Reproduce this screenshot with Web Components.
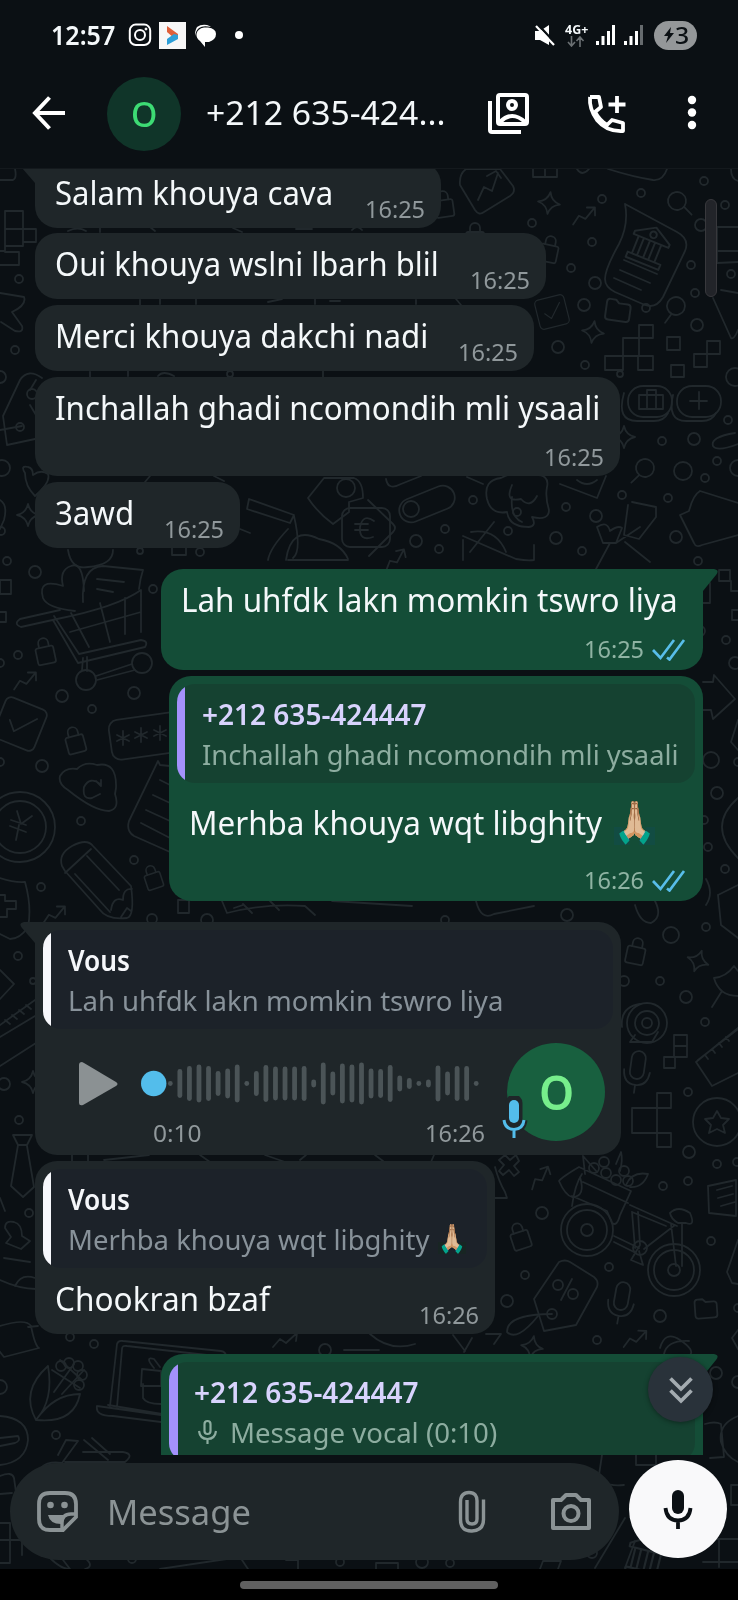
<!DOCTYPE html>
<html lang="fr"><head><meta charset="utf-8"><title>Discussion</title>
<style>
html,body{margin:0;background:#000}
body{width:738px;height:1600px;overflow:hidden;font-family:"Noto Sans",sans-serif;color:#f4f8fa}
</style></head><body>
<chat-app></chat-app>
<script>
const def=(name,html,init)=>customElements.define(name,class extends HTMLElement{
  connectedCallback(){
    if(this.shadowRoot)return;
    const t=document.createElement('template');
    t.innerHTML=typeof html==='function'?html(this):html;
    this.attachShadow({mode:'open'}).appendChild(t.content.cloneNode(true));
    if(init)init(this,this.shadowRoot);
  }});

/* A single line of text set to a given width */
def('fit-text','<style>:host{display:block;white-space:nowrap;flex:none}span{display:inline-block;transform-origin:0 50%}</style><span><slot></slot></span>',(el,r)=>{
  const s=r.querySelector('span'),w=+el.getAttribute('w');
  el.style.width=w+'px';
  s.style.transform='scaleX('+w/s.offsetWidth+')';
});

/* Doodle wallpaper */
const ring=[[346,488,9],[19,279,4],[15,350,4],[0,377,6],[2,468,8],[7,561,4],[35,572,6],[153,589,4],[18,655,4],[0,663,4],[62,696,6],[134,693,6],[92,709,4],[42,766,6],[0,762,4],[81,821,4],[134,860,4],[41,887,4],[18,956,4],[33,981,3],[4,1084,6],[19,1120,4],[29,1213,4],[70,1337,4],[94,1344,4],[56,1435,4],[0,1387,7],[704,181,4],[602,199,4],[641,193,4],[725,205,4],[532,223,4],[701,225,6],[592,242,4],[571,268,4],[691,265,4],[595,283,6],[731,274,4],[695,293,4],[584,305,6],[646,308,4],[697,325,6],[558,347,6],[585,365,4],[735,377,9],[728,420,4],[662,441,4],[694,439,6],[683,471,9],[738,468,8],[717,461,4],[705,478,4],[622,495,4],[668,498,4],[473,500,4],[566,507,4],[596,516,6],[676,537,6],[445,529,4],[416,541,6],[439,549,4],[556,538,6],[582,551,4],[698,561,4],[726,640,4],[735,663,6],[700,631,5],[711,760,8],[738,762,4],[717,793,6],[708,847,4],[725,869,4],[704,820,4],[567,915,6],[671,935,8],[706,927,4],[660,981,4],[686,997,6],[705,1022,4],[624,981,5],[688,1092,4],[689,1152,6],[717,1164,4],[663,1186,4],[688,1181,4],[542,1213,6],[711,1241,4],[609,1267,4],[525,1275,4],[507,1301,6],[660,1316,6],[597,1340,4],[716,1373,6],[738,1382,6],[738,1308,4],[737,1162,4],[445,920,4],[152,919,5],[207,920,6],[325,1350,6],[422,1562,6],[450,1563,4],[592,1553,5],[340,1562,4],[132,1559,4],[140,551,3],[200,552,4],[230,374,3],[620,374,3]];
const use=(id,a)=>a.map(([x,y,r=0,s=1])=>`<use href="#${id}" transform="translate(${x} ${y}) rotate(${r}) scale(${s})"/>`).join('');
def('wall-paper',`<style>:host{display:block}svg{display:block;width:738px;height:1400px}</style>
<svg viewBox="0 169 738 1400" fill="none" stroke="#21282c" stroke-width="1.8" stroke-linecap="round" stroke-linejoin="round">
<defs>
<g id="lock"><rect x="-9" y="-5" width="18" height="17" rx="2"/><path d="M-5-5v-4a5 5 0 0 1 10 0v4"/></g>
<path id="star" d="M0-11Q2-2 11 0 2 2 0 11-2 2-11 0-2-2 0-11z"/>
<path id="trend" d="M-12 7L-5-1 1 3 12-7M4-8l8 1-1 8"/>
<g id="mag"><circle r="9"/><path d="M6 7l6 9"/></g>
<path id="folder" d="M-11-7q0-3 3-3h5l3 3h8q3 0 3 3v10q0 3-3 3h-16q-3 0-3-3z"/>
<g id="mic"><rect x="-7" y="-20" width="14" height="28" rx="7"/><path d="M-13 0q1 14 13 14t13-14M0 14v8"/></g>
<g id="tag"><path d="M-8-32L22-32Q28-32 28-26V26Q28 32 22 32H-8L-30 10V-10z"/><circle cx="-18" cy="0" r="4"/></g>
<g id="cal"><rect x="-22" y="-22" width="44" height="44" rx="6"/><path d="M-11 0l8 9 17-20"/></g>
<g id="bank"><path d="M-17-8L0-18 17-8v3h-34zM-16 12h32v5h-32zM-12-4v15M-7-4v15M-1-4v15M4-4v15M10-4v15"/><circle cy="-11" r="3"/></g>
</defs>
${ring.map(c=>`<circle cx="${c[0]}" cy="${c[1]}" r="${c[2]}"/>`).join('')}
${use('lock',[[45,652,-12],[75,741,-15],[549,250,12],[444,205,-8],[636,952,12],[520,1237,-18],[153,878,-18,.9],[475,237,0]])}
${use('star',[[549,203,8],[593,332,8],[698,961,20],[28,515,0],[33,1082,0],[624,437,0],[532,1347,10]])}
${use('trend',[[584,216,-8],[25,681,-8],[54,915,-8],[540,1178,-25],[635,1339,-5],[395,560,-20],[285,1340]])}
${use('mag',[[677,201,-10],[676,306,70],[645,468,80]])}
${use('folder',[[618,311,8,1.1],[706,1309,-4]])}
${use('mic',[[637,1071,8],[621,1302,10]])}
${use('cal',[[20,724,22],[552,312,-14,.68]])}
<path d="M460 185l15 25q4 6 9 2l26-16q6-4 3-10L500 169H466q-7 5-6 16M478 200l6-13 8 4 6-18M487 176l9-5 5 7"/>
<path d="M625 204q4 20-6 40-14 25-14 35 0 8 10 13l30 13q11 4 18-8l22-46q5-12-8-19L625 204M624 260l33 14M620 270l30 13M614 278l27 12"/>
<g transform="translate(649 246) rotate(22) scale(1.1)"><use href="#bank"/></g>
<path d="M608 169q25 8 45 11 10 1 14-11M533 169v8h24v-8M545 169v8M577 169q5 8 12 0M731 169q0 10 7 12M0 180l13 0q4-2 2-11"/>
<path d="M5 211h18v35H5zM5 229h31v13H23M5 229v23h14v13H0M0 251h5"/>
<path d="M0 293l24 4q3 8-12 15l10 14q2 7-7 5l-14-9M3 416L20 380q8-12 22-2M7 445l28-6M3 416l4 29M0 430l22-4M36 380l-6 10M30 405l6 10"/><circle cx="20" cy="427" r="4"/><circle cx="32" cy="394" r="5"/>
<path d="M25 473q-5-8 3-6 5 1 5 8 8-6 15-1 3 8-13 22-10-10-10-23M0 500q8 5 4 20l-4 9"/><circle cx="1" cy="531" r="4"/>
<path d="M605 356h18v14h-18zM623 356h16v-18h-16zM639 338h14v-13h-14zM638 356h15v14h-15zM667 337h13v13h-13zM671 365h13v12h-13zM694 354h13v13h-13zM707 341h13v13h-13z"/>
<path d="M717 227h21M718 251h20M717 228v35l21-1M713 298l18 40q3 2 7-8M721 290l17 3"/>
<rect x="628" y="386" width="44" height="31" rx="15"/><rect x="677" y="386" width="44" height="31" rx="15"/><path d="M624 393q-8 28 13 28h17q10 0 14-8M673 395q-6 26 13 26h16q10 0 14-8M639 395h24v14h-24zM647 395v14M656 395v14M647 394v-4h9v4M690 401h17M699 392v17M735 433q-25 4-22 13 4 6 25-2"/>
<path d="M308 498l16-20h30q9 3 9 20l-14 4v10l-16 12q-16-12-25-26"/><rect x="342" y="508" width="48" height="39" rx="8"/><path d="M374 521q-11-8-14 6-1 15 13 10M355 524h13M355 530h13"/>
<path d="M249 499l45 16-4 8-43-14zM294 516q8 35-1 42M240 529l10 4M268 560q2-12 20-31M286 560q5-35 33-21 22 4 29 20M288 560h60"/>
<rect x="398" y="492" width="58" height="24" rx="12" transform="rotate(-22 427 504)"/><circle cx="411" cy="509" r="8"/><path d="M368 500l25 24q4 4 0 8l-24 24M386 479q2 12 15 5l20-8M467 477l16 7"/>
<path d="M501 478q-18 2-14 21 4 16 20 13 2 15 22 15 8-1 3-10 17 4 17-7-4-13-2-23 3-13-14-12-17-5-32 3M512 485q-8 18 9 14 9 10 16-3M512 497q-2 20 10 25"/><circle cx="517" cy="512" r="4"/><circle cx="508" cy="531" r="4"/><path d="M463 536l53 23q12 2 18 1v-15M463 560V540M494 522l-24 30M471 532q25-4 35 20"/>
<path d="M560 484l37 14 9-22M577 480q10 8 20 0M628 505l-4 30 15 4 17-22v-10l-24-5M597 527q10-7 13 4 8-6 12-3l-6 15h-13zM616 543l24-16M610 543l-14 26M625 542l25 20M700 491q-7 4-11 20l-9 4 14 28q2 5 8 2l36-10M700 491l38 12"/>
<path d="M68 550q3 20 20 17 25-2 25-17M0 580h11v14H0zM0 612h6v10H0M172 548v7h14v-7"/>
<path d="M84 591q-1-30-13-25-12 4-8 20-26-8-20 12 4 10 32 13M83 602q-2-35 20-36l40 4q-3 9-4 19M97 579l27 3M97 589l16 3"/>
<path d="M60 610l-40 9q-7 5 1 8l36-8q60-12 84-29v42M54 616l25 38 62-14q8 1 4 7l-67 16-25-43M71 613l18 34M100 603l10 39M125 598v36M70 632l71-20M83 658l-1 12M87 657v14M96 676l36-12M97 680l38-10"/><circle cx="86" cy="680" r="10"/><circle cx="142" cy="663" r="10"/>
<rect x="110" y="716" width="72" height="40" rx="9" transform="rotate(-8 146 736)"/><path d="M123 731v14M117 735l12 6M129 735l-12 6M141 728v14M135 732l12 6M147 732l-12 6M160 726v14M154 730l12 6M166 730l-12 6"/>
<path d="M68 790q-10-6-8-14 5-9 17-7 8-8 20-4 20-4 19 23l-1 6q5 15-6 17-15 0-41-21M100 784q-10-8-16 3-2 13 8 11l8-4M96 781l5 5v-6"/>
<path d="M170 852l-36-16q-8-5-5-15l29-60 2 4 10 1M160 780l10 5M153 795l17 8M146 810l24 11M141 823l29 15"/>
<circle cx="20" cy="827" r="35"/><circle cx="20" cy="827" r="26"/><path d="M17 811l4 13 11-8M19 825l-3 15M10 826l16 6M11 820l15 5"/>
<path d="M62 866q-4-12 10-20 15-8 21 0l38 40q4 30-4 32-20 2-27-8l-35-39zM75 874l35 38M87 856l32 34M65 873l26-24M111 910q2-14 12-10 0-12 9-11M121 917l6-9 4 3"/>
<path d="M0 878q15 5 25 4 7 25 3 45-8 12-18 12L0 934M0 895h5v6h11v8H7v8H0"/>
<path d="M178 357v7h12v-7zM178 900v13h11v-13zM222 901l5 12q40-10 78-7l10 9M243 904l9 9M270 901l9 9M234 908l9-3M332 901l80 5M476 901q5 20 18 13l40-8M635 905q5 18 16 18 12-6 4-22M718 895l20-10M718 895l3 30 17 13M706 905q8-12 0-26"/>
<path d="M703 682h10l1-7 21 24-22 20-2-9h-8M738 720l-7 22 7 8M738 798q-32 28 0 60M719 570h11v11h-11zM731 581v10h7M702 603h8v-20M738 610h-6v10h6"/>
<path d="M0 970l14 14-14 15M0 1025l35-25M0 1037l35-21M5 1020l5 4M12 1015l5 4M19 1010l5 4M26 1005l5 4M0 1066l36-23"/>
<path d="M13 1135h19l-5 10h-9zM18 1145l-7 41 12 11 11-10-7-41M0 1198l5 13M5 1228q0-8 9-6 8 2 8 14l8 5-9 8-15-6 5-6zM0 1280q20 9 36 9M15 1286q6-13 20-8M4 1258l26 4"/>
<path d="M620 1003l-20-5M620 1040h-25M622 1027q-2-20 18-23"/><circle cx="647" cy="1023" r="20"/><circle cx="647" cy="1023" r="12"/><circle cx="647" cy="1023" r="5"/><path d="M635 1035l-5 7h22l6-10"/>
<path d="M714 978q12-1 20-12l4 5M714 978q5 18 24 18M722 991l-10 16M738 1028l-42 34 16 24 26-13M698 1060l40-31M705 1055l3 4M712 1049l3 4M719 1043l3 4M726 1037l3 4M674 1035h13v22h-13zM674 1046h13M664 1057h11v11h-11zM632 1108h25v25h-25zM657 1093h14v15h-14zM657 1133h14v14h-14zM657 1108v25"/>
<circle cx="717" cy="1122" r="24"/><path d="M717 1111l4 7 8 1-6 6 2 8-8-4-8 4 2-8-6-6 8-1z"/>
<circle cx="587" cy="1230" r="26"/><circle cx="587" cy="1230" r="20"/><circle cx="587" cy="1230" r="6"/><circle cx="674" cy="1270" r="26"/><circle cx="674" cy="1270" r="20"/><circle cx="674" cy="1270" r="6"/>
<path d="M572 1206q3-22 10-32M572 1196l35 15 5 12q5 4 8-8l11-24-52-24q-17 10-20 14 6 14 13 16 14 0 8-20M583 1182l45 21M585 1174l-2-18 14 16M616 1164l5-12q2 8-1 19M626 1185q6-14 22-11-5 14-18 13M630 1205l47 21M632 1212l34 14M632 1212l3 36M638 1212l2 33M675 1225l-31 24M671 1224l5 42M682 1224v42M614 1236l25 12M614 1242l22 11M670 1213q8-8 20 0 6 14-4 10h-8q-7-4-8-10M640 1245l-9 15 12 5-4-14"/><circle cx="640" cy="1248" r="7"/>
<g><circle cx="594" cy="1168" r="5"/><circle cx="604" cy="1162" r="5"/><circle cx="606" cy="1173" r="5"/><circle cx="616" cy="1180" r="5"/><circle cx="624" cy="1171" r="5"/><circle cx="628" cy="1181" r="5"/></g>
<path d="M495 1167q4 15 10 25l2 6h-12M505 1155l5 5 6-5 3 6-5 5 5 6-5 4-5-6-6 5-4-4 5-6-5-5z"/>
<path d="M559 1262q6-3 11 0l24 15q5 4 3 10l-21 38-32 6-10-32z"/><circle cx="552" cy="1314" r="5"/><circle cx="558" cy="1285" r="5"/><circle cx="573" cy="1294" r="5"/><path d="M572 1279l-11 21M552 1314q-45 0-45 18 10 10 31-16"/>
<path d="M708 1186l28-6v36l-27-3zM717 1190l15-4M718 1198l15-4M721 1206l14-4M738 1240l-11 32 5 11 6 1M738 1330l-6 8 6 11M660 1348q5-18 20-8t10 15M664 1354q3-14 25-13"/>
<path d="M72 1155v8M88 1155v8M104 1160l45-5M200 1155l10 7M265 1155l20 7M300 1160l6-5M434 1155l-3 7M375 1155l8 6M68 231q10-5 18 0M100 226v6M150 227l5 4M233 228l9 4M296 229h16M352 230q5-6 10 0M140 300v5M160 299v5M196 299v5M268 302l14-3M315 298v6M330 301h10M90 372v5M128 371v5M158 376q5-6 16 0M323 371v6M150 476l-5 6M214 476l10 5M416 300v4M456 299l5 6"/>
<path d="M0 1326q26-8 31 0 4 20 8 22l-35 9-8-10M28 1327l10-1"/>
<path d="M48 1366q-28 25-12 54 18-20 12-54M36 1420q38 4 44-26-26 0-44 26M52 1370l28 18M60 1360l22 20M54 1392l20-28M62 1394l22-24"/><g><circle cx="61" cy="1366" r="5"/><circle cx="69" cy="1363" r="5"/><circle cx="78" cy="1366" r="5"/><circle cx="82" cy="1375" r="5"/><circle cx="79" cy="1385" r="5"/></g>
<path d="M0 1416q28 2 28 24-2 22-28 25M0 1438l18-2q3 5-3 7l-15 3M108 1405l54 9M97 1406l64 9M97 1406q-2 10 16 10l48 6M110 1406l7-62q1-4 6-3l98 10q6 1 5 8M117 1407l5-58q0-4 5-3l80 9M142 1369l19 2v15h-20zM143 1384v14q3 6 18 6M154 1368q-10-12 0-9l6 8"/>
<path d="M42 1467q6-6 20-4l16-22-12-1-8 15M84 1440l24 20M92 1438l18 16M65 1462h60q10-8-2-10h-40M0 1476q12-5 14 2l2 14M0 1494l12-1M0 1523h10v40H0M0 1540h22v15M50 1558q10 10 18 11M60 1556l10 13M85 1558q10 8 0 11M160 1569l80-12 8 12M286 1560h12v9M376 1569v-6h22v6M540 1569l3-8h18l-3 8"/>
<path d="M602 1455l-3 20q2 12 25 10M636 1455v10h20v-12M625 1518l-30 50M635 1541l-10 27M705 1424q10-3 16 0l3 33-14 1M738 1416q-20 8-17 26 4 14 17 20M738 1485h-7v20h7M712 1539h26M719 1539v28M703 1562h35"/><use href="#bank" transform="translate(648 1557) rotate(14) scale(1.2)"/>
<path d="M370 1334q20 18 45 10M453 1335l12 16M472 1338l-8 14M486 1334l15 0-7 10M344 1350h35"/>
</svg>`);

/* Status bar */
def('status-bar',`<style>
:host{display:flex;height:70px;align-items:center;padding-left:51px;box-sizing:border-box}
fit-text{font-weight:600;font-size:27px;line-height:40px}
svg{flex:none;display:block}.ig{margin-left:13px}.bx{margin-left:7px}.ch{margin-left:7px}.dot{margin-left:18px;width:8px;height:8px;border-radius:50%;background:#fff}
.sp{flex:1}.net{width:24px;margin-left:8px;height:24px;display:flex;flex-direction:column;align-items:center}
.net fit-text{font-size:13px;font-weight:700;line-height:13px}
.bat{margin:0 41px 0 10px;width:43px;height:29px;border-radius:15px;background:#949799;color:#0b1014;display:flex;align-items:center;justify-content:center}
.bat fit-text{font-size:23px;line-height:29px;font-weight:500}
</style><fit-text w="64">12:57</fit-text>
<svg class="ig" width="24" height="24" fill="none" stroke="#fff"><rect x="1.800" y="1.600" width="20.400" height="20.400" rx="6" stroke-width="2"/><circle cx="12" cy="12" r="5" stroke-width="2"/><circle cx="18" cy="6" r="1" fill="#fff"/></svg>
<svg class="bx" width="27" height="27"><path fill="#f7f7f7" d="M0 0h27v27H0z"/><path fill="#e0603a" d="M8 4l11 8v3l-4 1-7-6z"/><path fill="#2d9fd8" d="M19 13v4L8 23v-6l7-5z"/></svg>
<svg class="ch" width="24" height="24" fill="#fff"><path d="M4 4Q8 1 14 2q3 1 4 2-8-2-12 1-4 3-3 8-2-4 1-9"/><path d="M11 4.500h4q8 1 8 6.500t-7 8h-4v5l-5-6q-4-3-3.500-7 1-5.500 7.500-6.500"/></svg>
<div class="dot"></div><div class="sp"></div>
<svg width="22" height="24" fill="#fff"><path d="M1 8h5l9-6v20l-9-5H1z"/><path d="M3.500 1L21 20" stroke="#0b1014" stroke-width="2.500"/><path d="M2 3L20 22" stroke="#fff" stroke-width="2.200"/></svg>
<div class="net"><fit-text w="23">4G+</fit-text><svg width="18" height="11" fill="none" stroke="#6b7073" stroke-width="1.600"><path d="M4.500 0v9M1 6l3.500 4L8 6M13 11V1M9.500 5L13 1l3.500 4"/></svg></div>
<svg style="margin-left:8px" width="20" height="22" fill="#fff"><path d="M0 17h3v4H0zM5.500 12h3v9h-3zM11 7h3v14h-3zM16 1h3v20h-3z"/></svg>
<svg style="margin-left:8px" width="20" height="22" fill="#fff"><path d="M0 17h3v4H0zM5.500 12h3v9h-3zM11 7h3v14h-3z"/><path fill="#666b6e" d="M16 1h3v20h-3z"/></svg>
<div class="bat"><svg width="12" height="16"><path d="M8 0L1 9h4l-2 7 8-10H7z" fill="#0b1014"/></svg><fit-text w="14">3</fit-text></div>`);

/* Conversation header */
def('chat-header',`<style>
:host{display:flex;height:99px;align-items:center;box-sizing:border-box;padding:0 0 12px 31px;border-bottom:1px solid #14191d}
svg{flex:none}.av{width:74px;height:74px;border-radius:50%;background:#103529;color:#3ddb74;display:grid;place-items:center;margin:1px 25px 0 41px;font-size:35px;font-weight:500;line-height:40px}
fit-text.t{font-size:33px;line-height:48px;margin-top:0}
</style>
<svg width="35" height="36" fill="none" stroke="#fff" stroke-width="4"><path d="M18.500 2.500L4 18l14.500 15.500M4 18h30"/></svg>
<div class="av"><fit-text w="26">O</fit-text></div>
<fit-text class="t" w="240">+212 635-424...</fit-text>
<svg style="margin-left:40px" width="44" height="44" fill="none" stroke="#fff" stroke-width="4"><rect x="12" y="4" width="29" height="29" rx="2"/><path d="M4 10v29q0 2 2 2h29"/><circle cx="26" cy="14" r="4"/><path d="M14 31q12-12 25 0"/></svg>
<svg style="margin-left:55px" width="44" height="44" fill="none" stroke="#fff" stroke-width="3.800" stroke-linejoin="round"><path d="M5 6h9l2 10-6 5q5 9 12 13l5-5 11 3v8Q22 41 12 29 4 18 5 6M32 5v17M23.500 13.500h17"/></svg>
<svg style="margin-left:58px" width="10" height="36" fill="#fff"><circle cx="5" cy="5" r="4.200"/><circle cx="5" cy="17.500" r="4.200"/><circle cx="5" cy="30" r="4.200"/></svg>`);

/* Quoted message */
def('chat-quote',`<style>
:host{display:block;height:99px;box-sizing:border-box;margin:8px 8px 0;border-radius:18px;overflow:hidden;background:linear-gradient(90deg,var(--bar) 8.5px,var(--q) 8.500px);padding:9px 0 0 25px}
.t{font-size:28px;line-height:42px;font-weight:600;color:var(--qt)}
.s{font-size:28px;line-height:38px;color:var(--qs);display:flex;align-items:center}
</style><div class="t"><slot name="title"></slot></div><div class="s"><slot></slot></div>`);

/* Message bubble */
def('chat-bubble',e=>`<style>
:host{display:grid;position:relative;box-sizing:border-box;flex:none;width:${e.getAttribute('w')}px;height:${e.getAttribute('h')}px;margin-top:${e.getAttribute('gap')}px;margin-left:${e.getAttribute('x')}px;
background:var(--bg);border-radius:22px;--bg:#1f2629;--q:#1c2229;--bar:#f7f8fc;--qt:#f5f7fa;--qs:#88929a;--tm:#90989b}
:host([out]){--bg:#144d37;--q:#154231;--bar:#a491fb;--qt:#d8d3fd;--qs:#8dada0;--tm:#8fb3a3}
:host([tail][out]){border-top-right-radius:0}:host([tail]:not([out])){border-top-left-radius:0}
.c,.f{grid-area:1/1}.c{align-self:start;min-width:0}
.f{place-self:end;display:flex;align-items:center;gap:8px;margin:0 16px 3px 0;font-size:23.500px;line-height:32px;color:var(--tm)}
:host([out]) .f{margin:0 17px 5px 0}
.tail{position:absolute;top:0;width:15px;height:23px;fill:var(--bg)}
:host([out]) .tail{left:100%}:host(:not([out])) .tail{right:100%}
</style><div class="c"><slot></slot></div>
${e.hasAttribute('time')?`<div class="f"><fit-text w="60">${e.getAttribute('time')}</fit-text>${e.hasAttribute('out')?'<svg width="34" height="23" fill="none" stroke="#58bde9" stroke-width="2.700"><path d="M1 12l7.500 8L22 2M15 19.500l2.500 2L32 2M15.500 13.500"/></svg>':''}</div>`:''}
${e.hasAttribute('tail')?(e.hasAttribute('out')?'<svg class="tail"><path d="M0 0h11q6 1 2 6L0 22z"/></svg>':'<svg class="tail"><path d="M15 0H4q-6 1-2 6l13 15z"/></svg>'):''}`);

def('msg-line',`<style>:host{display:flex;align-items:center;font-size:32px;line-height:44px;padding:9px 0 0 20px}</style><slot></slot>`);

/* Folded hands emoji with teal cuffs */
def('hands-emoji',e=>`<style>:host{display:block;position:relative;flex:none;font-size:${e.getAttribute('size')}px;line-height:1.1;font-family:"Noto Color Emoji","Noto Sans",sans-serif;width:${e.getAttribute('w')}px}span{display:block;width:max-content}
i{position:absolute;inset:0;background:#2cc9b2;mix-blend-mode:hue;clip-path:polygon(0 60%,20% 60%,38% 92%,38% 100%,62% 100%,62% 92%,80% 60%,100% 60%,100% 110%,0 110%)}</style><span>🙏🏼</span><i></i>`,(el,r)=>{
  const s=r.querySelector('span');s.style.transformOrigin='0 50%';s.style.transform='scaleX('+(+el.getAttribute('w'))/s.offsetWidth+')';
});

/* Voice note */
const bars=[4,29,35,38,35,25,30,38,5,25,37,34,34,34,35,8,42,24,40,38,42,30,29,37,16,11,5,8,36,24,35,35,5];
def('voice-note',`<style>
:host{display:flex;height:126px;padding-left:43px;color:#90989b;font-size:23.500px;line-height:32px}
.play{margin-top:32px;flex:none}.m{width:350px;margin-left:19px;padding-top:28px;flex:none}
.w{display:block}.r{display:flex;justify-content:space-between;padding:6px 3px 0 15px}
.a{position:relative;flex:none;width:98px;height:98px;border-radius:50%;background:#18603f;margin:14px 0 0 19px;display:grid;place-items:center;color:#77ee8c;font-size:46px;line-height:56px;font-weight:600}
.a fit-text{margin-top:-1px}.a svg{position:absolute;left:-7px;top:53px}
</style>
<svg class="play" width="41" height="46"><path d="M4 1Q1 1 1 4v38q0 3 4 2l33-19q3-2 0-4L6 2z" fill="#8b9193"/></svg>
<div class="m"><svg class="w" width="345" height="54"><circle cx="15.700" cy="26.500" r="12.700" fill="#53bdeb"/><g stroke="#4b5457" stroke-width="4.800" stroke-linecap="round">${bars.map((h,i)=>{const x=32.3+i*9.56,d=Math.max(.1,(h-4.8)/2);return`<path d="M${x} ${26.5-d}V${26.5+d}"/>`}).join('')}</g></svg>
<div class="r"><fit-text w="49">0:10</fit-text><fit-text w="60">16:26</fit-text></div></div>
<div class="a"><fit-text w="35">O</fit-text><svg width="28" height="46" fill="none"><path d="M14 7v17" stroke="#1f2629" stroke-width="17" stroke-linecap="round"/><path d="M4 24q1 9 10 9.500 9-.5 10-9.500" stroke="#1f2629" stroke-width="7"/><path d="M14 9v13" stroke="#53bdeb" stroke-width="10" stroke-linecap="round"/><path d="M4 24q1 9 10 9.500 9-.5 10-9.500M14 33v9" stroke="#53bdeb" stroke-width="3"/></svg></div>`);

/* Message list */
def('message-list',`<style>:host{display:block;height:1286px;overflow:hidden;position:relative}
.l{display:flex;flex-direction:column;margin-top:-7px}
.sb{position:absolute;left:705px;top:30px;width:12px;height:98px;box-sizing:border-box;border-radius:6px;background:#222429;border:1.500px solid #38383c}
.dn{position:absolute;left:648px;top:1188px;width:65px;height:65px;border-radius:50%;background:#29323a;box-shadow:0 1px 5px #0006;display:grid;place-items:center}
.mi{margin-right:12px;margin-left:3px}
</style>
<div class="l">
<chat-bubble w="406" h="66" x="35" gap="0" tail time="16:25"><msg-line><fit-text w="278">Salam khouya cava</fit-text></msg-line></chat-bubble>
<chat-bubble w="511" h="66" x="35" gap="5" time="16:25"><msg-line><fit-text w="384">Oui khouya wslni lbarh blil</fit-text></msg-line></chat-bubble>
<chat-bubble w="499" h="66" x="35" gap="6" time="16:25"><msg-line><fit-text w="373">Merci khouya dakchi nadi</fit-text></msg-line></chat-bubble>
<chat-bubble w="585" h="99" x="35" gap="6" time="16:25"><msg-line><fit-text w="545">Inchallah ghadi ncomondih mli ysaali</fit-text></msg-line></chat-bubble>
<chat-bubble w="205" h="66" x="35" gap="6" time="16:25"><msg-line><fit-text w="79">3awd</fit-text></msg-line></chat-bubble>
<chat-bubble out tail w="542" h="101" x="161" gap="21" time="16:25"><msg-line><fit-text w="497">Lah uhfdk lakn momkin tswro liya</fit-text></msg-line></chat-bubble>
<chat-bubble out w="534" h="225" x="169" gap="6" time="16:26"><chat-quote><fit-text slot="title" w="224">+212 635-424447</fit-text><fit-text w="477">Inchallah ghadi ncomondih mli ysaali</fit-text></chat-quote><msg-line style="padding-top:17px"><fit-text w="413">Merhba khouya wqt libghity</fit-text><hands-emoji size="41" w="41" style="margin-left:12px"></hands-emoji></msg-line></chat-bubble>
<chat-bubble tail w="586" h="233" x="35" gap="21"><chat-quote><fit-text slot="title" w="62">Vous</fit-text><fit-text w="435">Lah uhfdk lakn momkin tswro liya</fit-text></chat-quote><voice-note></voice-note></chat-bubble>
<chat-bubble w="460" h="173" x="35" gap="6" time="16:26"><chat-quote><fit-text slot="title" w="62">Vous</fit-text><fit-text w="361">Merhba khouya wqt libghity</fit-text><hands-emoji size="28" w="28" style="margin-left:9px"></hands-emoji></chat-quote><msg-line><fit-text w="215">Chookran bzaf</fit-text></msg-line></chat-bubble>
<chat-bubble out tail w="542" h="225" x="161" gap="20"><chat-quote><fit-text slot="title" w="224">+212 635-424447</fit-text><svg class="mi" width="21" height="26" fill="none" stroke="#8dada0" stroke-width="2.200"><rect x="7.500" y="2" width="6" height="13" rx="3"/><path d="M2 12q1 8 8.500 8T19 12M10.500 20v5"/></svg><fit-text w="267">Message vocal (0:10)</fit-text></chat-quote></chat-bubble>
</div><div class="sb"></div>
<div class="dn"><svg width="26" height="30" fill="none" stroke="#a3abb0" stroke-width="3.700"><path d="M2.500 3.500L13 14 23.500 3.500M2.500 15.500L13 26l10.500-10.500"/></svg></div>`);

/* Composer */
def('chat-composer',`<style>
:host{display:flex;height:114px;box-sizing:border-box;padding:5px 11px 0 10px;align-items:start}
.p{display:flex;align-items:center;width:609px;height:97px;border-radius:49px;background:#1f2629;margin-top:3px;color:#8b9395}
fit-text{font-size:35px;line-height:48px;margin:0 0 0 28px}
.p svg{flex:none;fill:none;stroke:#8b9395}.b{width:98px;height:98px;margin-left:10px;border-radius:50%;background:#f9f9fa;display:grid;place-items:center;flex:none}
</style><div class="p">
<svg style="margin-left:26px" width="43" height="43" stroke-width="3.800"><path d="M14 3h15q11 0 11 11v13L27 40H14Q3 40 3 29V14Q3 3 14 3z"/><path d="M40 24H35q-9 0-9 9v7" stroke-width="3.400"/><path d="M12 25h16l-3 6v3Q14 34 12 25z" fill="#8b9395" stroke="none"/><g fill="#8b9395" stroke="none"><circle cx="14.500" cy="15" r="3.300"/><circle cx="28.500" cy="15" r="3.300"/></g></svg>
<fit-text w="144">Message</fit-text>
<svg style="margin-left:207px" width="28" height="43" stroke-width="3.400" stroke-linecap="butt"><path d="M25.500 9.500v20q0 11-11.500 11.500T2.500 29.500V12Q2.500 2.500 11 2.500T19 12v17q0 5-5 5t-5-5V10"/></svg>
<svg style="margin-left:63px" width="43" height="40" stroke-width="4" stroke-linejoin="round"><path d="M4 8h8l5-5h10l5 5h8v28H4z"/><circle cx="22" cy="21.500" r="7.500"/></svg>
</div><div class="b"><svg width="32" height="42" fill="none" stroke="#0b1014"><path d="M16 8v12" stroke-width="12" stroke-linecap="round"/><path d="M3.500 20q1 12 12.500 12.500Q27.500 32 28.500 20M16 32v9" stroke-width="3.800"/></svg></div>`);

def('nav-bar','<style>:host{display:flex;height:31px;background:#000;justify-content:center;align-items:center}div{width:258px;height:8px;border-radius:4px;background:#606060;margin-top:1px}</style><div></div>');

def('chat-app',`<style>
:host{display:block;position:relative;width:738px;height:1600px;background:#0b1014;overflow:hidden}
wall-paper{position:absolute;top:169px;left:0}
main{position:relative}
</style><wall-paper></wall-paper><main><status-bar></status-bar><chat-header></chat-header><message-list></message-list><chat-composer></chat-composer><nav-bar></nav-bar></main>`);
</script></body></html>
